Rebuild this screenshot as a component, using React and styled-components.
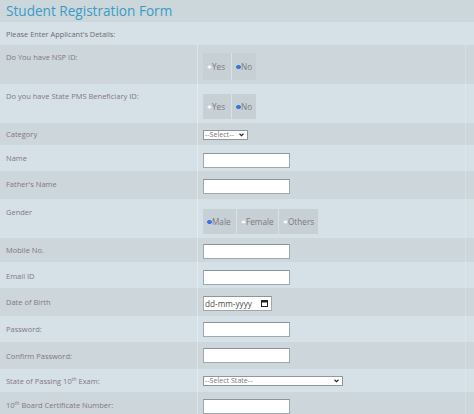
import React from "react";
import styled, { createGlobalStyle } from "styled-components";

const Global = createGlobalStyle`
  html, body { margin: 0; padding: 0; background: #d3dee4; }
  body { font-family: "Open Sans", "Liberation Sans", sans-serif; }
  * { box-sizing: border-box; }
`;

const Page = styled.div`
  width: 474px;
  height: 414px;
  overflow: hidden;
  background: #d3dee4;
`;

const TitleBar = styled.div`
  height: 22px;
  background: #ccd7dc;
  display: flex;
  align-items: center;
  padding-left: 6px;
`;

const Title = styled.h1`
  margin: 0;
  font-family: "Open Sans", sans-serif;
  font-weight: 500;
  font-size: 13.6px;
  color: #3a9cc4;
  line-height: 1;
`;

const InfoBar = styled.div`
  height: 23px;
  background: #d5e1e7;
  display: flex;
  align-items: center;
  padding-left: 6px;
  font-size: 7.4px;
  color: #6f6a70;
`;

const Row = styled.div`
  display: grid;
  grid-template-columns: 198px 268px 1fr;
  height: ${(p) => p.$h}px;
  background: ${(p) => (p.$dark ? "#ccd6db" : "#d5e1e7")};
`;

const Label = styled.div`
  border-right: 1px solid rgba(255, 255, 255, 0.35);
  padding: ${(p) => p.$pt}px 0 0 6px;
  font-size: 7.5px;
  line-height: 10px;
  color: #84777f;
  white-space: nowrap;

  sup {
    font-size: 5px;
    line-height: 0;
  }
`;

const Control = styled.div`
  padding: ${(p) => p.$pt}px 0 0 5px;
  border-right: 1px solid rgba(255, 255, 255, 0.2);
`;

const TextBox = styled.div`
  width: ${(p) => p.$w || 87}px;
  height: 15px;
  background: #fff;
  border: 1px solid #9fa8ad;
  border-top-color: #8c959a;
  display: flex;
  align-items: center;
  justify-content: space-between;
  padding: 0 3px 0 1px;
  font-size: 8.2px;
  color: #4d4d4d;
`;

const SelectBox = styled.div`
  position: relative;
  width: ${(p) => p.$w}px;
  height: 10px;
  background: #fff;
  border: 1px solid #8e979c;
  display: flex;
  align-items: center;
  padding: 0 1px;
  font-size: 7.1px;
  color: #7a7a7a;
  line-height: 1;
`;

const Chevron = styled.svg`
  position: absolute;
  right: 3px;
  top: 2px;
  width: 5px;
  height: 4px;
`;

const RadioGroup = styled.div`
  display: inline-flex;
  height: ${(p) => p.$h}px;
  background: #c6d0d5;
`;

const RadioCell = styled.label`
  width: ${(p) => p.$w}px;
  display: flex;
  align-items: center;
  padding-left: 4px;
  font-size: 8.2px;
  color: #84777f;
  & + & {
    border-left: 1px solid rgba(255, 255, 255, 0.35);
  }
`;

const Dot = styled.span`
  width: 4.5px;
  height: 4.5px;
  border-radius: 50%;
  margin-right: 0.5px;
  background: ${(p) => (p.$on ? "#3b78e7" : "#fff")};
  border: ${(p) => (p.$on ? "1px solid #3572e0" : "0.5px solid #d6dcdf")};
  flex: none;
`;

const Cal = () => (
  <svg width="7" height="7" viewBox="0 0 7 7">
    <rect x="0.5" y="0.5" width="6" height="6" fill="none" stroke="#222" strokeWidth="1" />
    <rect x="0.5" y="0.5" width="6" height="2" fill="#222" />
  </svg>
);

const Radios = ({ h, items }) => (
  <RadioGroup $h={h}>
    {items.map((it) => (
      <RadioCell key={it.label} $w={it.w}>
        <Dot $on={it.on} />
        {it.label}
      </RadioCell>
    ))}
  </RadioGroup>
);

const Select = ({ w, text }) => (
  <SelectBox $w={w}>
    {text}
    <Chevron viewBox="0 0 10 8">
      <path d="M1 1.5 L5 5.5 L9 1.5" fill="none" stroke="#222" strokeWidth="2.2" />
    </Chevron>
  </SelectBox>
);

const rows = [
  { label: "Do You have NSP ID:", h: 39, lt: 7, ct: 7, ctrl: <Radios h={27} items={[{ label: "Yes", w: 28 }, { label: "No", w: 25, on: true }]} /> },
  { label: "Do you have State PMS Beneficiary ID:", h: 39, lt: 7, ct: 8, ctrl: <Radios h={25} items={[{ label: "Yes", w: 28 }, { label: "No", w: 25, on: true }]} /> },
  { label: "Category", h: 22, lt: 6, ct: 7, ctrl: <Select w={45} text="--Select--" /> },
  { label: "Name", h: 26, lt: 8, ct: 8, ctrl: <TextBox /> },
  { label: "Father's Name", h: 28, lt: 8, ct: 8, ctrl: <TextBox /> },
  { label: "Gender", h: 39, lt: 8, ct: 8, ctrl: <Radios h={25} items={[{ label: "Male", w: 33, on: true }, { label: "Female", w: 42 }, { label: "Others", w: 40 }]} /> },
  { label: "Mobile No.", h: 24, lt: 7, ct: 6, ctrl: <TextBox /> },
  { label: "Email ID", h: 26, lt: 9, ct: 8, ctrl: <TextBox /> },
  { label: "Date of Birth", h: 28, lt: 9, ct: 8, ctrl: <TextBox $w={69}>dd-mm-yyyy<Cal /></TextBox> },
  { label: "Password:", h: 26, lt: 8, ct: 6, ctrl: <TextBox /> },
  { label: "Confirm Password:", h: 27, lt: 9, ct: 6, ctrl: <TextBox /> },
  { label: <>State of Passing 10<sup>th</sup> Exam:</>, h: 23, lt: 7, ct: 7, ctrl: <Select w={140} text="--Select State--" /> },
  { label: <>10<sup>th</sup> Board Certificate Number:</>, h: 30, lt: 8, ct: 7, ctrl: <TextBox /> },
];

export default function App() {
  return (
    <Page>
      <Global />
      <TitleBar>
        <Title>Student Registration Form</Title>
      </TitleBar>
      <InfoBar>Please Enter Applicant's Details:</InfoBar>
      {rows.map((r, i) => (
        <Row key={i} $h={r.h} $dark={i % 2 === 0}>
          <Label $pt={r.lt}>{r.label}</Label>
          <Control $pt={r.ct}>{r.ctrl}</Control>
          <div />
        </Row>
      ))}
    </Page>
  );
}
